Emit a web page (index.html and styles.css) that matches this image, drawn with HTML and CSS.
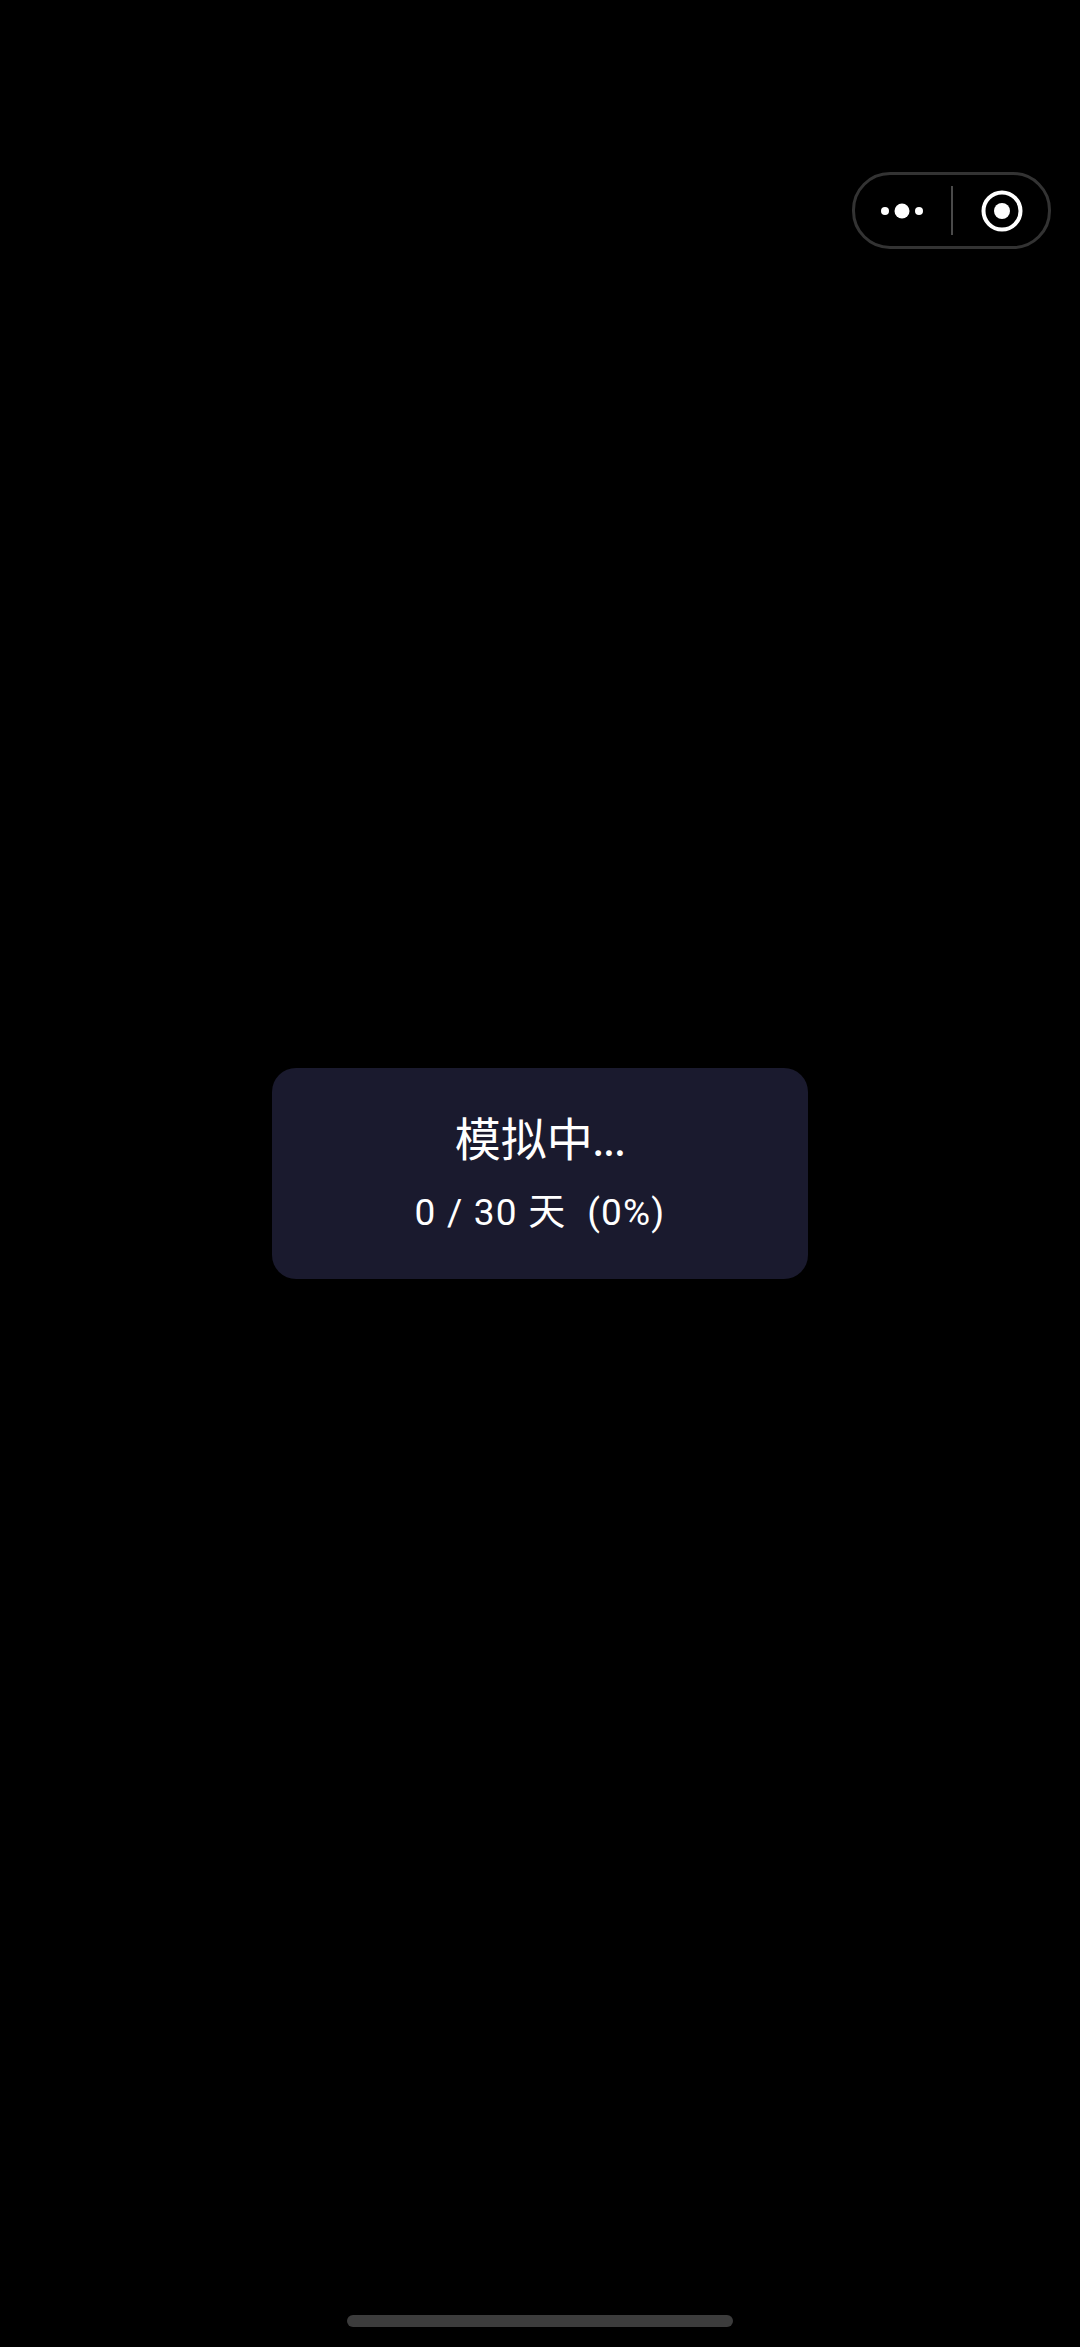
FILE: index.html
```html
<!DOCTYPE html>
<html lang="zh-CN">
<head>
    <meta charset="UTF-8">
    <meta name="viewport" content="width=device-width, initial-scale=1.0">
    <title>模拟中</title>
    <link rel="stylesheet" href="styles.css">
</head>
<body>
    <div class="capsule">
        <svg class="capsule-more" width="60" height="20" viewBox="0 0 60 20">
            <circle cx="13" cy="10" r="4" fill="#fff"/>
            <circle cx="30" cy="10" r="7.5" fill="#fff"/>
            <circle cx="47" cy="10" r="4" fill="#fff"/>
        </svg>
        <div class="capsule-line"></div>
        <svg class="capsule-close" width="44" height="44" viewBox="0 0 44 44">
            <circle cx="22" cy="22" r="18.5" fill="none" stroke="#fff" stroke-width="4"/>
            <circle cx="22" cy="22" r="8" fill="#fff"/>
        </svg>
    </div>

    <div class="progress-card">
        <div class="progress-title">模拟中...</div>
        <div class="progress-text">0 / 30 天 &nbsp;(0%)</div>
    </div>

    <div class="home-bar"></div>
</body>
</html>
```

FILE: styles.css
```css
html, body {
    margin: 0;
    padding: 0;
    height: 100%;
}
body {
    background-color: #000000;
    color: #ffffff;
    font-family: Lato, "Noto Sans CJK SC", sans-serif;
    display: flex;
    align-items: center;
    justify-content: center;
    overflow: hidden;
}
.capsule {
    position: absolute;
    top: 172px;
    left: 852px;
    width: 199px;
    height: 77px;
    box-sizing: border-box;
    border: 3px solid #333333;
    border-radius: 38px;
    display: flex;
    align-items: center;
}
.capsule-more {
    margin-left: 17px;
}
.capsule-line {
    width: 2px;
    height: 49px;
    margin-left: 19px;
    background-color: #4a4a4a;
}
.capsule-close {
    margin-left: 27px;
}
.progress-card {
    width: 536px;
    height: 211px;
    box-sizing: border-box;
    padding-top: 42px;
    background-color: #1a1a2e;
    border-radius: 24px;
    text-align: center;
}
.progress-title {
    font-size: 46px;
    line-height: 58px;
}
.progress-text {
    font-family: Roboto, "Noto Sans CJK SC", sans-serif;
    font-size: 37px;
    line-height: 46px;
    margin-top: 22px;
    letter-spacing: 1.2px;
}
.home-bar {
    position: absolute;
    left: 347px;
    bottom: 20px;
    width: 386px;
    height: 12px;
    background-color: #3c3c3c;
    border-radius: 6px;
}
```
